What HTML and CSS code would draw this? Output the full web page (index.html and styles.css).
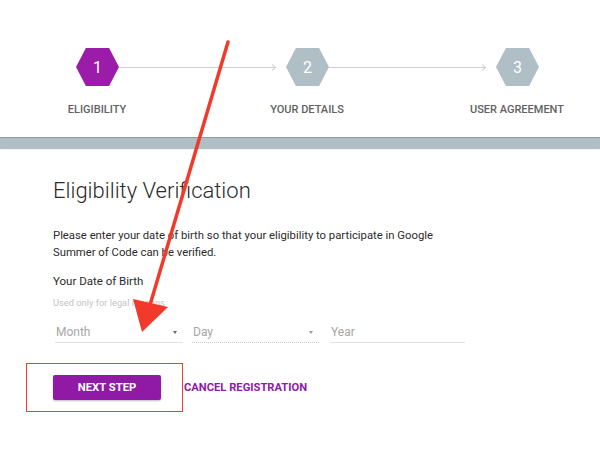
FILE: index.html
```html
<!DOCTYPE html>
<html>
<head>
<meta charset="utf-8">
<link rel="stylesheet" href="styles.css">
</head>
<body>
<div class="page">
  <header class="stepper">
    <div class="hex-row">
      <div class="hex active">1</div>
      <div class="connector"></div>
      <div class="hex">2</div>
      <div class="connector"></div>
      <div class="hex">3</div>
    </div>
    <div class="label-row">
      <div class="step-label">ELIGIBILITY</div>
      <div class="step-label">YOUR DETAILS</div>
      <div class="step-label">USER AGREEMENT</div>
    </div>
  </header>
  <div class="bar"></div>
  <main class="content">
    <h1 class="title">Eligibility Verification</h1>
    <p class="intro">Please enter your date of birth so that your eligibility to participate in Google Summer of Code can be verified.</p>
    <div class="field-label">Your Date of Birth</div>
    <div class="hint">Used only for legal reasons</div>
    <div class="fields">
      <div class="field month"><span>Month</span><span class="caret"></span></div>
      <div class="field day"><span>Day</span><span class="caret light"></span></div>
      <div class="field year"><span>Year</span></div>
    </div>
    <div class="actions">
      <button class="btn-primary">NEXT STEP</button>
      <button class="btn-link">CANCEL REGISTRATION</button>
    </div>
  </main>
  <div class="highlight-box"></div>
  <svg class="annotation" width="600" height="450" viewBox="0 0 600 450">
    <line x1="228" y1="42" x2="150" y2="305" stroke="#f23a2c" stroke-width="3.5" stroke-linecap="round"/>
    <polygon points="133,299 168,307 142,332" fill="#f23a2c"/>
  </svg>
</div>
</body>
</html>
```

FILE: styles.css
```css
html, body {
  margin: 0;
  padding: 0;
  background: #ffffff;
}
body {
  font-family: Roboto, "Noto Sans", "Liberation Sans", sans-serif;
  color: #2b2b2b;
}
.page {
  position: relative;
  width: 600px;
  height: 450px;
  overflow: hidden;
}
.stepper {
  height: 137px;
  box-sizing: border-box;
  padding-top: 48px;
  background: #ffffff;
}
.hex-row {
  display: flex;
  align-items: center;
  padding-left: 76px;
  width: 463px;
}
.hex {
  width: 43px;
  height: 38px;
  flex: none;
  display: flex;
  align-items: center;
  justify-content: center;
  background: #b0bec5;
  color: #ffffff;
  font-size: 16px;
  clip-path: polygon(23% 0, 77% 0, 100% 50%, 77% 100%, 23% 100%, 0 50%);
}
.hex.active {
  background: #9a1ca8;
}
.connector {
  flex: 1;
  height: 1px;
  background: #cfcfcf;
  margin-right: 11px;
  position: relative;
}
.connector::after {
  content: "";
  position: absolute;
  top: -2px;
  right: 0;
  width: 5px;
  height: 5px;
  border-top: 1px solid #cfcfcf;
  border-right: 1px solid #cfcfcf;
  transform: rotate(45deg);
  box-sizing: border-box;
}
.label-row {
  display: flex;
  padding-left: 37px;
  gap: 90px;
  margin-top: 17px;
}
.step-label {
  width: 120px;
  text-align: center;
  font-size: 11px;
  line-height: 13px;
  font-weight: 500;
  color: #616161;
}
.bar {
  height: 11px;
  background: #b0bec5;
  border-top: 1px solid #8c9fa3;
  box-shadow: 0 1px 2px rgba(0,0,0,0.06);
}
.content {
  padding-left: 53px;
  padding-top: 29px;
}
.title {
  margin: 0;
  font-size: 22px;
  line-height: 26px;
  font-weight: 300;
  color: #2b2b2b;
}
.intro {
  margin: 23px 0 0;
  width: 420px;
  font-size: 11.3px;
  line-height: 17px;
  color: #2b2b2b;
}
.field-label {
  margin-top: 12px;
  font-size: 11.5px;
  line-height: 17px;
  color: #2b2b2b;
}
.hint {
  margin-top: 7px;
  font-size: 9.3px;
  line-height: 12px;
  color: #c4c4c4;
}
.fields {
  display: flex;
  margin-top: 15px;
  margin-left: 2px;
}
.field {
  display: flex;
  align-items: center;
  justify-content: space-between;
  height: 17px;
  padding: 0 0 1px 1px;
  border-bottom: 1px solid #e2e2e2;
  font-size: 12px;
  line-height: 17px;
  color: #a6a6a6;
}
.field.month { width: 127px; }
.field.day { width: 126px; margin-left: 9px; border-bottom: 1px dotted #c8c8c8; }
.field.year { width: 134px; margin-left: 11px; }
.caret {
  width: 0;
  height: 0;
  border-left: 2.5px solid transparent;
  border-right: 2.5px solid transparent;
  border-top: 3px solid #666666;
  margin-right: 6px;
}
.caret.light {
  border-top-color: #999999;
}
.actions {
  display: flex;
  align-items: center;
  margin-top: 32px;
}
.btn-primary {
  width: 108px;
  height: 25px;
  border: none;
  border-radius: 2px;
  background: #9019a5;
  color: #ffffff;
  font-family: Roboto, "Noto Sans", "Liberation Sans", sans-serif;
  font-size: 11.3px;
  font-weight: 700;
  padding: 0;
  box-shadow: 0 1px 2px rgba(0,0,0,0.25);
}
.btn-link {
  margin-left: 23px;
  border: none;
  background: none;
  padding: 0;
  color: #9019a5;
  font-family: Roboto, "Noto Sans", "Liberation Sans", sans-serif;
  font-size: 11.2px;
  font-weight: 700;
}
.highlight-box {
  position: absolute;
  left: 26px;
  top: 363px;
  width: 157px;
  height: 49px;
  box-sizing: border-box;
  border: 1px solid #f03a35;
}
.annotation {
  position: absolute;
  left: 0;
  top: 0;
  pointer-events: none;
}
```
